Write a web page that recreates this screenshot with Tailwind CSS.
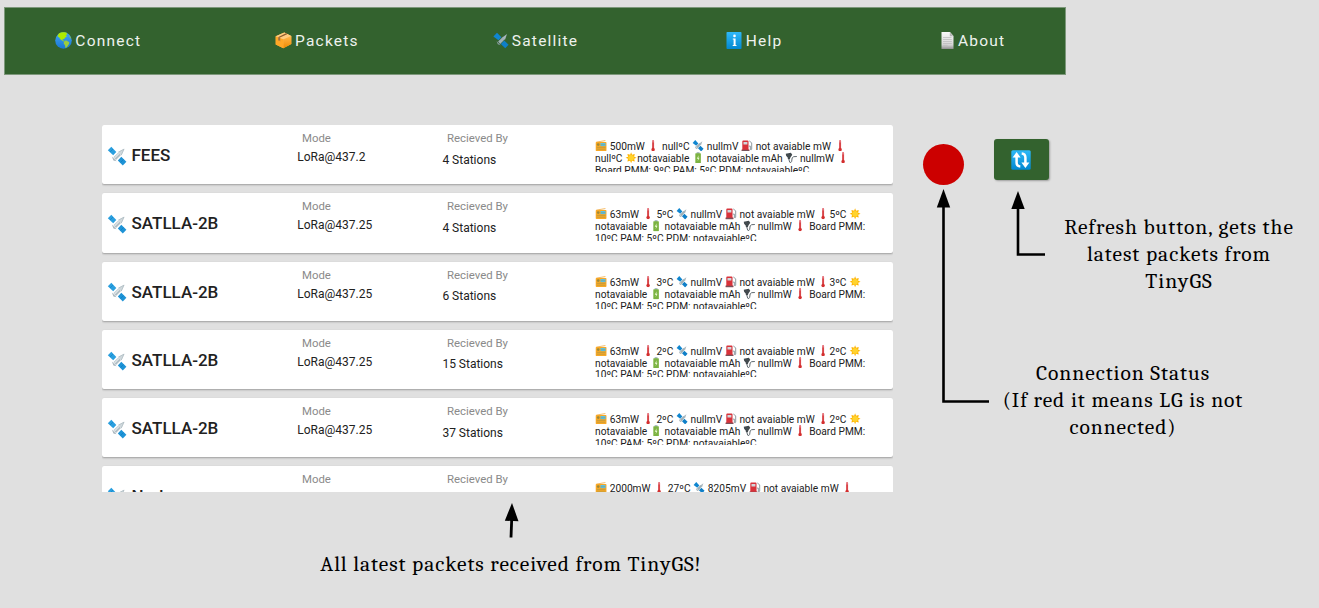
<!DOCTYPE html>
<html lang="en">
<head>
<meta charset="utf-8">
<title>TinyGS Packets</title>
<script src="https://cdn.jsdelivr.net/npm/@tailwindcss/browser@4"></script>
</head>
<body class="h-[608px] w-[1319px] overflow-hidden bg-[#e0e0e0] font-['Roboto',sans-serif] text-[#212121]">

<svg class="absolute size-0">
  <defs>
    <linearGradient id="gBlue" x1="0" y1="0" x2="0" y2="1"><stop offset="0" stop-color="#2fb9f8"/><stop offset="1" stop-color="#0288d1"/></linearGradient>
    <linearGradient id="gGlobe" x1="0" y1="0" x2="0" y2="1"><stop offset="0" stop-color="#42a5f5"/><stop offset="1" stop-color="#1976d2"/></linearGradient>
    <linearGradient id="gPage" x1="0" y1="0" x2="0" y2="1"><stop offset="0" stop-color="#fafafa"/><stop offset=".75" stop-color="#d5d5d5"/><stop offset="1" stop-color="#8f8f8f"/></linearGradient>
    <linearGradient id="gBox" x1="0" y1="0" x2="0" y2="1"><stop offset="0" stop-color="#ffb74d"/><stop offset="1" stop-color="#ef8a00"/></linearGradient>
  </defs>
  <symbol id="globe" viewBox="0 0 17 17">
    <circle cx="8.5" cy="8.5" r="8.3" fill="url(#gGlobe)"/>
    <path d="M3.6 1.8C6 .2 9 0 11.400.8L12.300 2.300 10.600 3.200 12 4.300 10.200 5.600 9 7.200 7.500 6.700 8 8.600 9.600 9.100 8.700 9.400 5.600 7.600 4 5.200 2.600 4.600Z" fill="#aeea00"/>
    <path d="M9.600 8.800 11.500 8.600 14.300 10.300 14 12.100 12.200 14.700 10.600 16.300 9.900 13.200 8.600 11.200Z" fill="#9ccc3c"/>
    <path d="M13.800 3.200 15.600 5 16.300 7 14.900 5.700Z" fill="#8bc34a"/>
  </symbol>
  <symbol id="box" viewBox="0 0 17 17">
    <path d="M.7 4.200 9.300.6 16.300 4.100V12L8.300 16.200.7 12.600Z" fill="#ffb347"/>
    <path d="M8.300 7.200 16.300 4.100V12L8.300 16.200Z" fill="url(#gBox)"/>
    <path d="M.7 4.200 8.300 7.200V16.200L.7 12.600Z" fill="#ffa726"/>
    <path d="M.7 4.200 9.300.6 16.300 4.100 8.300 7.200Z" fill="#ffcc80"/>
    <path d="M3.700 5.500 11.800 1.700" stroke="#8d5a2b" stroke-width="1.300"/>
    <path d="M3.200 5.200 5.200 6V9.400L4.200 8.200 3.200 8.700Z" fill="#a1703f"/>
  </symbol>
  <symbol id="sat" viewBox="0 0 20 20">
    <path d="M4.300.8 9.300 6 6.200 9.300 .8 4.300Z" fill="#2a9fdf"/>
    <path d="M14.300 10.800 19.400 15.700 15.800 19.400 10.800 14.500Z" fill="#1e93d6"/>
    <path d="M3 6 6 3M13.600 16.400 16.600 13.400" stroke="#0277bd" stroke-width=".5"/>
    <path d="M6.400 11.200 11.500 6.400 14 9 9 13.900Z" fill="#b0bec5"/>
    <path d="M11 6 17.500 2.500 14.500 9.500Z" fill="#cfd8dc"/>
    <path d="M11.500 6 17 3.200 14.300 9" stroke="#a5b3ba" stroke-width=".6" fill="none"/>
    <path d="M4.800 10.500 9.600 15.300 6.500 14.600Z" fill="#a3b1b8"/>
    <path d="M7.500 12 12 7.500" stroke="#dfe5e8" stroke-width="1.200"/>
  </symbol>
  <symbol id="satSmall" viewBox="0 0 20 20">
    <path d="M5 .2 10.500 6 6.800 9.800 .5 5Z" fill="#0f86d0"/>
    <path d="M14 10 19.500 15.200 15.300 19.800 9.800 14.500Z" fill="#0f7fc8"/>
    <path d="M6.400 11.200 12.500 5.400 15 8 9 14.500Z" fill="#9fb0b8"/>
    <path d="M12 6 17.500 2 15 9Z" fill="#a8b6bd"/>
    <path d="M4.500 10.500 9.600 15.800 6 14.800Z" fill="#8c9ca4"/>
  </symbol>
  <symbol id="info" viewBox="0 0 14 17">
    <rect x="-1" width="15" height="17" rx=".8" fill="url(#gBlue)"/>
    <circle cx="7" cy="3.900" r="1.300" fill="#fff"/>
    <path d="M5.300 6.500H8.100V13H9V14H5.200V13H6.100V7.500H5.300Z" fill="#fff"/>
  </symbol>
  <symbol id="page" viewBox="0 0 12 17">
    <path d="M0 0H8.500L12 4V17H0Z" fill="url(#gPage)"/>
    <path d="M8.300.2V4.200H11.900Z" fill="#b5b5b5"/>
    <path d="M1.500 5.500H10M1.500 7.500H10.300M1.500 9.500H10.300M1.500 11.500H10.300M1.500 13.300H6" stroke="#b9b9b9" stroke-width=".7"/>
  </symbol>
  <symbol id="radio" viewBox="0 0 12 12">
    <path d="M1 2.200 10.500.6" stroke="#f3b04b" stroke-width=".9"/>
    <rect x=".4" y="2" width="11.200" height="9.600" rx=".8" fill="#f9a825"/>
    <rect x="5.400" y="3.200" width="5.200" height="3.200" fill="#4fc3f7"/>
    <circle cx="3" cy="4.800" r="1.400" fill="#9d8a3a"/>
    <path d="M1.400 7.700H10.600M1.400 9.600H10.600M5.500 5H10.500" stroke="#a39346" stroke-width=".6"/>
  </symbol>
  <symbol id="therm" viewBox="0 0 12 12">
    <path d="M6 1V10" stroke="#e5737b" stroke-width="2.100" stroke-linecap="round"/>
    <path d="M6 2.500V10" stroke="#d32f2f" stroke-width="1.200"/>
    <circle cx="6" cy="10" r="1.800" fill="#d32f2f"/>
  </symbol>
  <symbol id="fuel" viewBox="0 0 12 12">
    <path d="M1 1.500Q1 .5 2 .5H6.500Q7.500.5 7.500 1.500V10H8.300V11.700H.4V10H1Z" fill="#d8323a"/>
    <path d="M2.200 2H6.300V4.800H2.200Z" fill="#cfd8dc"/>
    <path d="M.4 10.300H8.300V11.700H.4Z" fill="#78525a"/>
    <path d="M8.300 1 10.800 3V9.600Q10.500 10.700 9.400 9.900V6.400H7.800" fill="none" stroke="#7b8a91" stroke-width=".9"/>
  </symbol>
  <symbol id="sun" viewBox="0 0 12 12">
    <path d="M6 .3 7 2.800 9.800 2 9.200 4.900 11.700 6 9.200 7.100 9.800 10 7 9.200 6 11.700 5 9.200 2.200 10 2.800 7.100 .3 6 2.800 4.900 2.200 2 5 2.800Z" fill="#ffb300"/>
    <circle cx="6" cy="6" r="3" fill="#ffd32e"/>
  </symbol>
  <symbol id="batt" viewBox="0 0 12 12">
    <rect x="4.500" y=".3" width="3" height="1.500" fill="#90a4ae"/>
    <rect x="3.100" y="1.300" width="5.800" height="10.400" rx=".5" fill="#7cb342"/>
    <path d="M6.600 3.500 4.600 7H6L5.500 9.600 7.500 6.100H6.200Z" fill="#eefbd5"/>
  </symbol>
  <symbol id="plug" viewBox="0 0 12 12">
    <path d="M.4 1.700 5.800.9 7.200 2.800 5.300 5.700 4.600 7.600 2.700 7.400 2.300 5.400.9 4.300Z" fill="#424a4e"/>
    <path d="M3.600 7.300 4.500 10.600Q6 11.700 6.600 9.800L7.100 6.200Q7.800 4.300 12 4.700" fill="none" stroke="#59636a" stroke-width="1"/>
  </symbol>
</svg>

<div class="flex h-full flex-col">
  <nav class="mt-[7px] ml-1 flex h-[68px] w-[1062px] shrink-0 overflow-hidden border border-[#7d987b] bg-[#33622e]">
    <div class="-ml-[16px] grid w-[1093px] shrink-0 grid-cols-5 items-center pb-px text-[15.5px] leading-none tracking-[1.2px] text-[#eef2ee]">
      <a class="flex items-center justify-center gap-[3px]"><svg class="size-[17px]"><use href="#globe"/></svg><span class="pt-[2px]">Connect</span></a>
      <a class="flex items-center justify-center gap-[3px]"><svg class="size-[17px]"><use href="#box"/></svg><span class="pt-[2px]">Packets</span></a>
      <a class="flex items-center justify-center gap-[3px]"><svg class="h-[17px] w-4"><use href="#satSmall"/></svg><span class="pt-[2px]">Satellite</span></a>
      <a class="flex items-center justify-center gap-[3px]"><svg class="h-[17px] w-[17px]"><use href="#info"/></svg><span class="pt-[2px]">Help</span></a>
      <a class="flex items-center justify-center gap-[3px]"><svg class="h-[17px] w-[15px]"><use href="#page"/></svg><span class="pt-[2px]">About</span></a>
    </div>
  </nav>

  <main class="mt-[50px] flex h-[367px] shrink-0 pl-[102px]">
    <section id="packets" class="flex w-[791px] shrink-0 flex-col gap-[9px] overflow-hidden"></section>

    <aside class="ml-[30px] flex w-[66px] shrink-0 flex-col pt-[18.5px]">
      <div class="size-[41px] rounded-full bg-[#cc0000]"></div>
      <svg class="mt-1 ml-[13px] h-[215px] w-[53px]" viewBox="0 0 53 215">
        <path d="M7.500 16V212.500H53" fill="none" stroke="#000" stroke-width="2.600"/>
        <path d="M7.500 0 14.200 18.500H.8Z"/>
      </svg>
    </aside>

    <aside class="flex flex-1 flex-col pt-[14px] font-['Cambria','Caladea','Noto_Serif','Droid_Serif','Liberation_Serif',serif] text-[21.5px] leading-[27px] tracking-[0.95px] text-black">
      <button class="ml-[5px] flex h-[41px] w-[55px] shrink-0 items-center justify-center rounded-[3px] bg-[#33622e] shadow-[1px_1px_2px_rgba(0,0,0,0.3)]">
        <svg class="-ml-[2px] size-5" viewBox="0 0 20 20">
          <rect x=".3" y=".3" width="19.400" height="19.400" rx="1.500" fill="url(#gBlue)"/>
          <path d="M5.600 6.500V12.500Q5.600 16.300 9.300 16.600M14.400 13.500V7.500Q14.400 3.700 10.700 3.400" fill="none" stroke="#fff" stroke-width="2.500"/>
          <path d="M5.600 2 9.600 7.600H1.600ZM14.400 18 18.400 12.400H10.400Z" fill="#fff"/>
        </svg>
      </button>
      <div class="mt-[11px] flex h-[105px] shrink-0">
        <svg class="ml-[22px] h-[66px] w-[35px] shrink-0" viewBox="0 0 35 66">
          <path d="M7 16V63.500H34" fill="none" stroke="#000" stroke-width="2.600"/>
          <path d="M7 0 13.700 18H.3Z"/>
        </svg>
        <p class="ml-[13px] w-[240px] pt-[23px] text-center whitespace-nowrap">Refresh button, gets the<br>latest packets from<br>TinyGS</p>
      </div>
      <p class="ml-[9px] w-[250px] pt-[64px] text-center whitespace-nowrap">Connection Status<br>(If red it means LG is not<br>connected)</p>
    </aside>
  </main>

  <footer class="mt-[11px] flex w-[1020px] flex-col items-center font-['Cambria','Caladea','Noto_Serif','Droid_Serif','Liberation_Serif',serif] text-[21.5px] leading-[27px] tracking-[0.92px] text-black">
    <svg class="ml-[2px] h-[35px] w-[15px]" viewBox="0 0 15 35">
      <path d="M7.800 14 7 34.500" stroke="#000" stroke-width="2.800"/>
      <path d="M8 0 14.500 18.200.8 17.700Z"/>
    </svg>
    <p class="mt-[13px] ml-[2px] whitespace-nowrap">All latest packets received from TinyGS!</p>
  </footer>
</div>

<script>
const icon = n => `<svg class="inline-block h-[11.5px] w-[12.2px] align-[-2px]"><use href="#${n}"/></svg>`;
const fill = s => s.replace(/\{(\w+)\}/g, (_, n) => icon(n));
const satlla = t => [
  `{radio} 63mW {therm} ${t}ºC {satSmall} nullmV {fuel} not avaiable mW {therm}${t}ºC {sun}`,
  `notavaiable {batt} notavaiable mAh {plug} nullmW {therm} Board PMM:`,
  `10ºC PAM: 5ºC PDM: notavaiableºC`];
const packets = [
  ['FEES', 'LoRa@437.2', 4, [
    '{radio} 500mW {therm} nullºC {satSmall} nullmV {fuel} not avaiable mW {therm}',
    'nullºC {sun}notavaiable {batt} notavaiable mAh {plug} nullmW {therm}',
    'Board PMM: 9ºC PAM: 5ºC PDM: notavaiableºC']],
  ['SATLLA-2B', 'LoRa@437.25', 4, satlla(5)],
  ['SATLLA-2B', 'LoRa@437.25', 6, satlla(3)],
  ['SATLLA-2B', 'LoRa@437.25', 15, satlla(2)],
  ['SATLLA-2B', 'LoRa@437.25', 37, satlla(2)],
  ['Norby', '', '', ['{radio} 2000mW {therm} 27ºC {satSmall} 8205mV {fuel} not avaiable mW {therm}']],
];
document.getElementById('packets').innerHTML = packets.map(([name, mode, n, lines]) => `
  <article class="flex h-[59.25px] shrink-0 rounded-[2px] bg-white shadow-[0_1px_2px_rgba(0,0,0,0.3)]">
    <div class="flex w-[195px] items-center gap-[4.5px] pt-[2.5px] pl-[5px] text-[17px] font-medium">
      <svg class="size-5"><use href="#sat"/></svg><span>${name}</span>
    </div>
    <div class="w-[145px] pt-[6px] text-[12px] leading-[15px]">
      <div class="pl-[5px] text-[11.4px] text-[#8a8a8a]">Mode</div>
      <div class="mt-[4.2px] pl-[0.3px]">${mode}</div>
    </div>
    <div class="w-[153px] pt-[6px] text-[12px] leading-[15px]">
      <div class="pl-[5px] text-[11.4px] text-[#8a8a8a]">Recieved By</div>
      <div class="mt-[6.7px] pl-[0.4px]">${n ? n + ' Stations' : ''}</div>
    </div>
    <div class="mt-[14.8px] h-[32.700px] overflow-hidden text-[10.2px] leading-[12px] whitespace-nowrap">
      ${lines.map(l => `<div class="h-3 last:pt-[0.8px] first:pt-0">${fill(l)}</div>`).join('')}
    </div>
  </article>`).join('');
</script>
</body>
</html>
